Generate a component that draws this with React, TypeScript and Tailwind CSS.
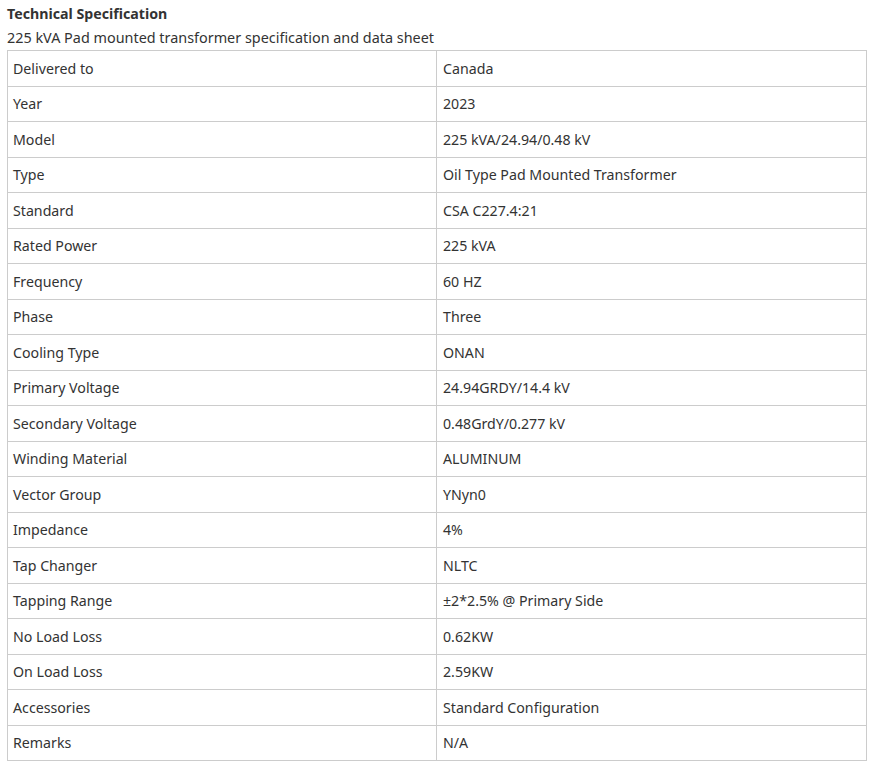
import React from 'react'

const rows: [string, string][] = [
    ["Delivered to", "Canada"],
    ["Year", "2023"],
    ["Model", "225 kVA/24.94/0.48 kV"],
    ["Type", "Oil Type Pad Mounted Transformer"],
    ["Standard", "CSA C227.4:21"],
    ["Rated Power", "225 kVA"],
    ["Frequency", "60 HZ"],
    ["Phase", "Three"],
    ["Cooling Type", "ONAN"],
    ["Primary Voltage", "24.94GRDY/14.4 kV"],
    ["Secondary Voltage", "0.48GrdY/0.277 kV"],
    ["Winding Material", "ALUMINUM"],
    ["Vector Group", "YNyn0"],
    ["Impedance", "4%"],
    ["Tap Changer", "NLTC"],
    ["Tapping Range", "±2*2.5% @ Primary Side"],
    ["No Load Loss", "0.62KW"],
    ["On Load Loss", "2.59KW"],
    ["Accessories", "Standard Configuration"],
    ["Remarks", "N/A"],
]

const App = () => {
    return (
        <div className="px-[7px] pt-[2px] text-[14.2px] text-[#333] bg-white min-h-screen"
             style={{fontFamily: '"Segoe UI", "Noto Sans", sans-serif'}}>
            <div className="font-bold leading-[24px]">Technical Specification</div>
            <div className="leading-[24px] text-[14.4px]">225 kVA Pad mounted transformer specification and data sheet</div>
            <table className="w-[860px] border-collapse table-fixed">
                <tbody>
                {rows.map(([label, value]) => (
                    <tr key={label} className="h-[35.5px]">
                        <td className="w-[429px] border border-[#ccc] pl-[5px] pr-[6px] py-0 align-middle">{label}</td>
                        <td className="border border-[#ccc] px-[6px] py-0 align-middle">{value}</td>
                    </tr>
                ))}
                </tbody>
            </table>
        </div>
    )
}

export default App;
